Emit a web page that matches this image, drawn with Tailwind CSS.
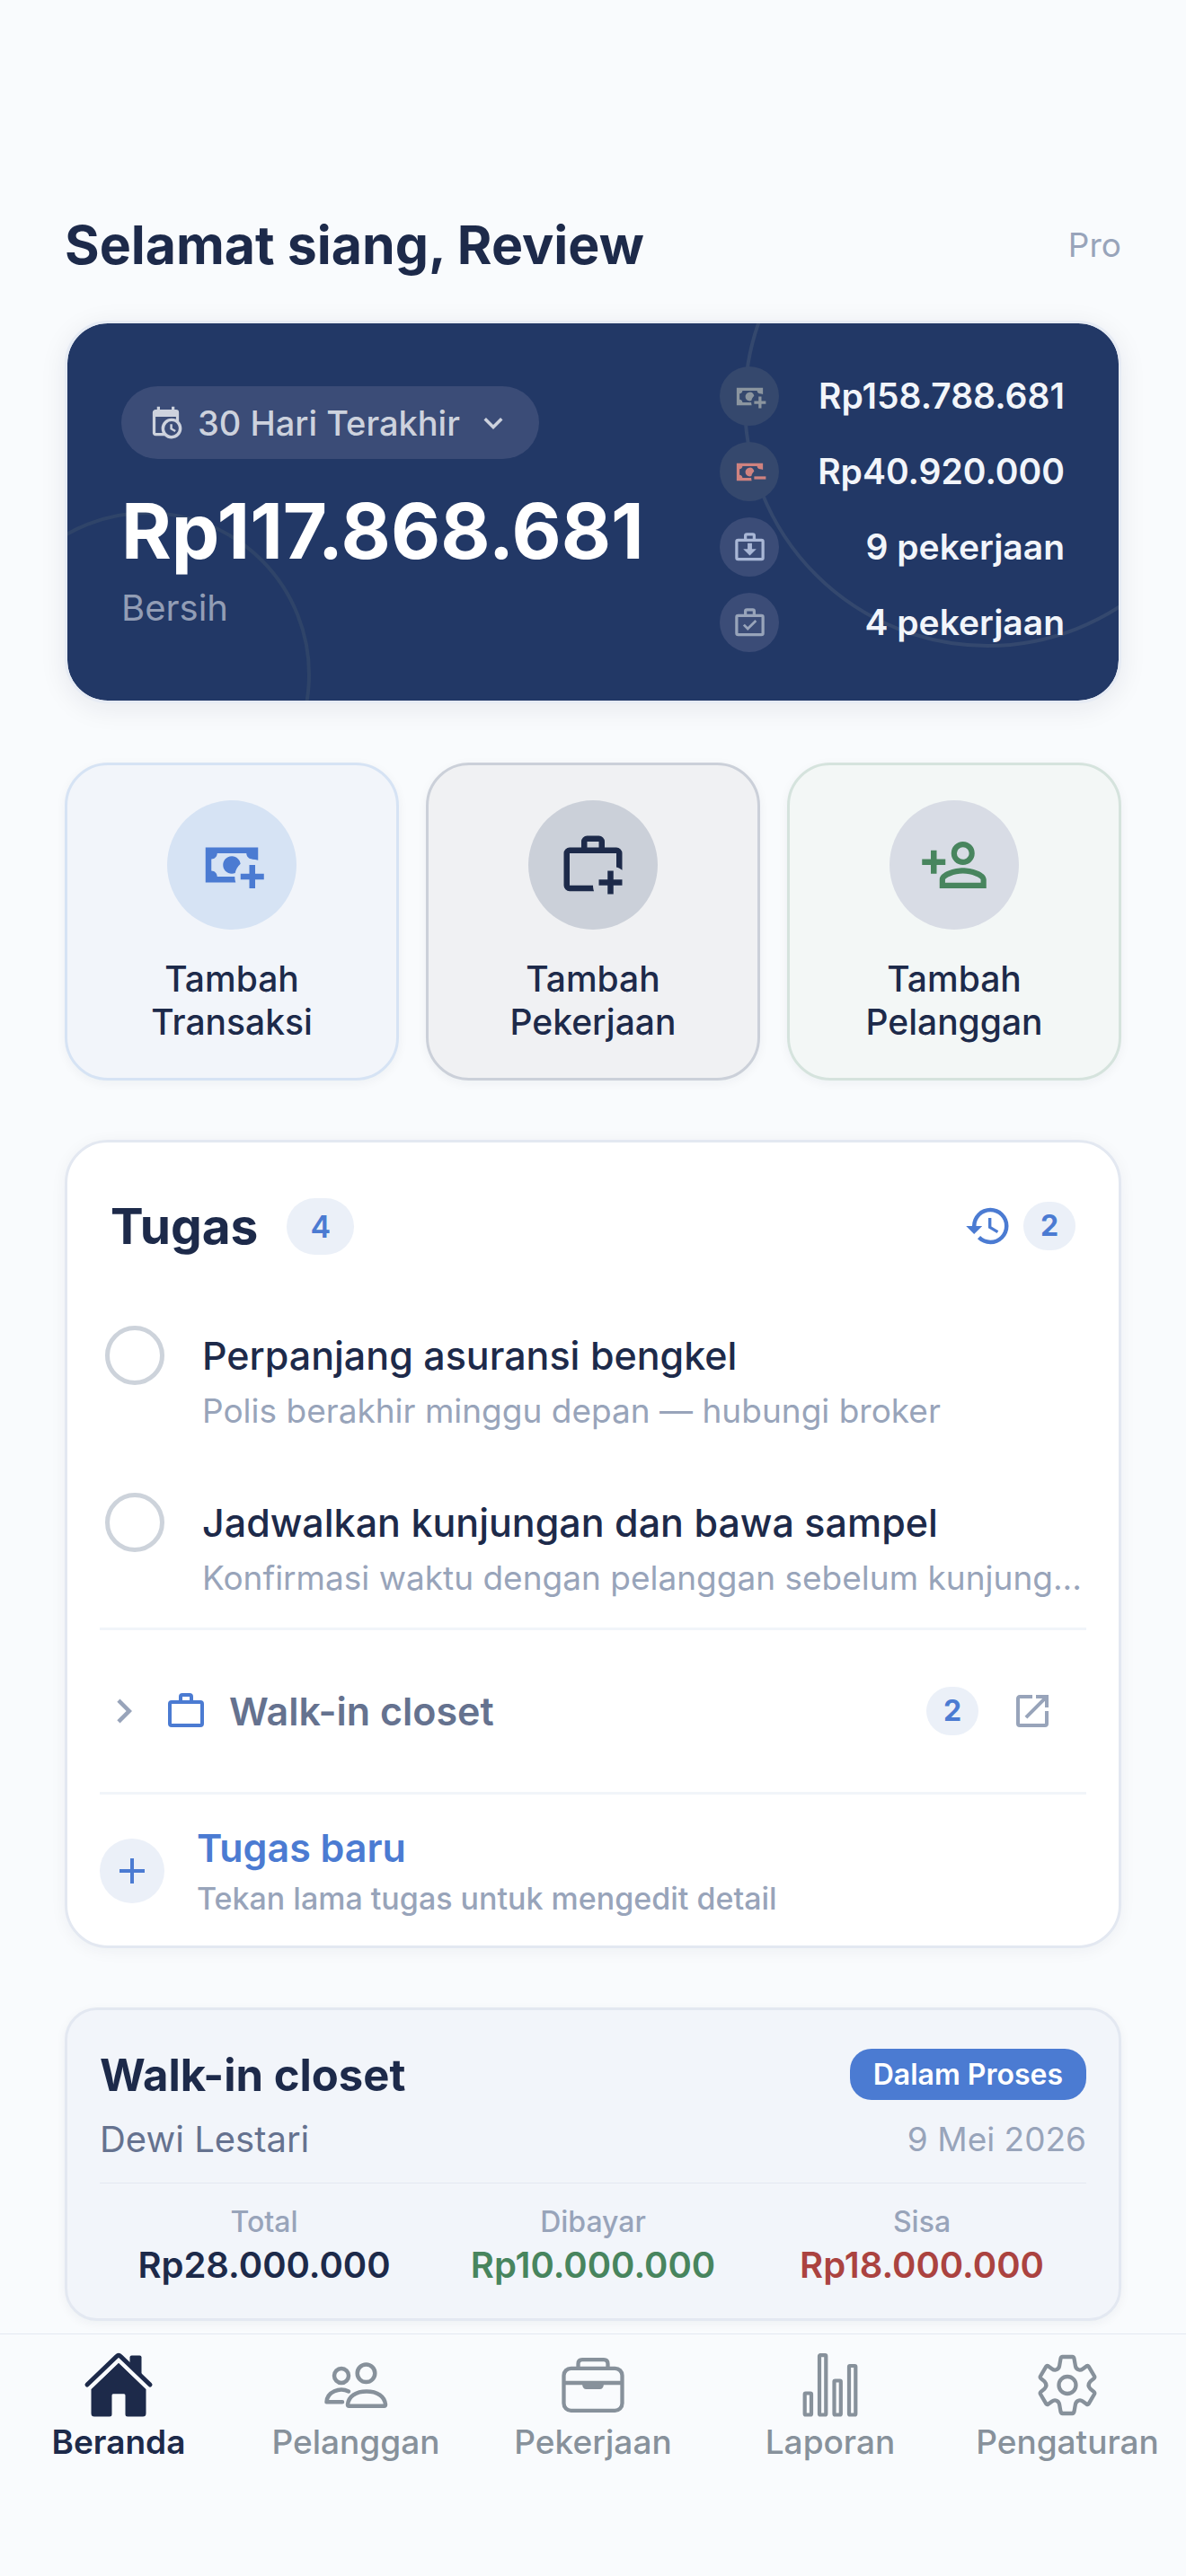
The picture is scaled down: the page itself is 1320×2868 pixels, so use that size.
<!DOCTYPE html>
<html lang="id">
<head>
    <meta charset="UTF-8">
    <meta name="viewport" content="width=device-width, initial-scale=1.0">
    <title>Beranda</title>
    <script src="https://cdn.jsdelivr.net/npm/@tailwindcss/browser@4"></script>
</head>
<body class="flex min-h-screen flex-col bg-[#f9fbfd] font-['Inter','Liberation_Sans',sans-serif] text-[#1d2a4a]">
    <!-- Shared icon shapes -->
    <svg class="hidden" aria-hidden="true">
        <symbol id="cash-body" viewBox="0 0 24 24">
            <path d="M14.97 11.61C14.85 10.28 13.59 8.97 12 9C10.3 9.03 9 10.3 9 12C9 13.7 10.3 14.94 12 15C12.38 15 12.77 14.92 13.14 14.77C13.41 13.67 13.86 12.63 14.97 11.61M13 16H7C7 14.9 6.1 14 5 14V10C6.1 10 7 9.1 7 8H17C17 9.1 17.9 10 19 10V10.06C19.67 10.06 20.34 10.18 21 10.4V6H3V18H13.32C13.1 17.33 13 16.66 13 16Z"/>
        </symbol>
        <symbol id="briefcase" viewBox="0 0 24 24">
            <path d="M20 6a2 2 0 0 1 2 2v11a2 2 0 0 1-2 2H4a2 2 0 0 1-2-2V8a2 2 0 0 1 2-2h4V4a2 2 0 0 1 2-2h4a2 2 0 0 1 2 2v2h4M4 8v11h16V8H4M14 6V4h-4v2h4Z"/>
        </symbol>
    </svg>

    <main class="flex flex-col gap-[66px] px-18 pt-[237px] pb-[14px]">
        <div class="flex flex-col gap-12">
            <header class="flex items-center justify-between">
                <h1 class="text-[59px] leading-[72px] font-bold">Selamat siang, Review</h1>
                <span class="text-[37px] leading-[48px] text-[#98a4ba]">Pro</span>
            </header>

            <!-- Summary card -->
            <section class="relative flex items-center justify-between overflow-hidden rounded-[48px] border-3 border-[#e6ebf4] bg-[#223866] bg-clip-padding px-15 pt-12 pb-[54px] shadow-[0_6px_30px_rgba(20,30,50,0.08)]">
                <div class="absolute -bottom-[153px] -left-[93px] size-[364px] rounded-full border-4 border-[#2f4469]"></div>
                <div class="absolute -top-[183px] right-[-126px] size-[544px] rounded-full border-4 border-[#34486e]"></div>
                <div class="relative">
                    <button class="flex h-[81px] items-center rounded-full bg-[#3b4c77] px-[30px] text-[#cdd2dd]">
                        <svg class="size-[39px] fill-current" viewBox="0 0 24 24"><path d="M15,13H16.5V15.82L18.94,17.23L18.19,18.53L15,16.69V13M19,8H5V19H9.67C9.24,18.09 9,17.07 9,16A7,7 0 0,1 16,9C17.07,9 18.09,9.24 19,9.67V8M5,21C3.89,21 3,20.1 3,19V5C3,3.89 3.89,3 5,3H6V1H8V3H16V1H18V3H19A2,2 0 0,1 21,5V11.1C22.24,12.36 23,14.09 23,16A7,7 0 0,1 16,23C14.09,23 12.36,22.24 11.1,21H5M16,11.15A4.85,4.85 0 0,0 11.15,16C11.15,18.68 13.32,20.85 16,20.85A4.85,4.85 0 0,0 20.85,16C20.85,13.32 18.68,11.15 16,11.15Z"/></svg>
                        <span class="ml-4 text-[38px] leading-[48px] font-medium">30 Hari Terakhir</span>
                        <svg class="ml-4 size-[42px] fill-current" viewBox="0 0 24 24"><path d="M7.41,8.58L12,13.17L16.59,8.58L18,10L12,16L6,10L7.41,8.58Z"/></svg>
                    </button>
                    <p class="mt-[33px] text-[85px] leading-[96px] font-bold text-white">Rp117.868.681</p>
                    <p class="mt-[10px] text-[40px] leading-[54px] text-[#929db5]">Bersih</p>
                </div>
                <ul class="relative flex w-96 flex-col gap-[18px] text-[39px] leading-[66px] font-semibold text-[#f2f5fa]">
                    <li class="flex items-center justify-between">
                        <span class="flex size-[66px] items-center justify-center rounded-full bg-[#35486d]">
                            <svg class="size-[39px] fill-[#8b959f]" viewBox="0 0 24 24"><use href="#cash-body"/><path d="M15 15V17H18V20H20V17H23V15H20V12H18V15Z"/></svg>
                        </span>
                        <span>Rp158.788.681</span>
                    </li>
                    <li class="flex items-center justify-between">
                        <span class="flex size-[66px] items-center justify-center rounded-full bg-[#35486d]">
                            <svg class="size-[39px] fill-[#cf827f]" viewBox="0 0 24 24"><use href="#cash-body"/><path d="M15 15V17H23V15Z"/></svg>
                        </span>
                        <span>Rp40.920.000</span>
                    </li>
                    <li class="flex items-center justify-between">
                        <span class="flex size-[66px] items-center justify-center rounded-full bg-[#3b4c77]">
                            <svg class="size-[39px] fill-[#a9b7d6]" viewBox="0 0 24 24"><use href="#briefcase"/><path d="M10.5 9h3v4h3L12 17.5 7.5 13h3Z"/></svg>
                        </span>
                        <span>9 pekerjaan</span>
                    </li>
                    <li class="flex items-center justify-between">
                        <span class="flex size-[66px] items-center justify-center rounded-full bg-[#3b4c77]">
                            <svg class="size-[39px] fill-[#98a4ba]" viewBox="0 0 24 24"><use href="#briefcase"/><path d="M10.6 17.2 7.3 13.9l1.2-1.2 2.1 2.1 5-5 1.2 1.2Z"/></svg>
                        </span>
                        <span>4 pekerjaan</span>
                    </li>
                </ul>
            </section>
        </div>

        <!-- Quick actions -->
        <div class="grid grid-cols-3 gap-[30px] text-[39px] leading-[48px] font-medium">
            <button class="flex flex-col items-center rounded-[48px] border-3 border-[#d6e3f4] bg-[#f2f5fa] px-6 pt-[39px] pb-[38px] shadow-[0_3px_12px_rgba(20,30,50,0.05)]">
                <span class="mb-[31px] flex size-36 items-center justify-center rounded-full bg-[#d6e3f4]">
                    <svg class="size-[78px] fill-[#4b7bd2]" viewBox="0 0 24 24"><use href="#cash-body"/><path d="M15 15V17H18V20H20V17H23V15H20V12H18V15Z"/></svg>
                </span>
                Tambah<br>Transaksi
            </button>
            <button class="flex flex-col items-center rounded-[48px] border-3 border-[#cbd0d9] bg-[#f0f1f3] px-6 pt-[39px] pb-[38px] shadow-[0_3px_12px_rgba(20,30,50,0.05)]">
                <span class="mb-[31px] flex size-36 items-center justify-center rounded-full bg-[#cbd0d9]">
                    <svg class="size-[78px] fill-[#1d2a4a]" viewBox="0 0 24 24"><path d="M20 6a2 2 0 0 1 2 2v5.8c-.58-.45-1.25-.8-2-1V8H4v11h8c0 .7.1 1.4.34 2H4a2 2 0 0 1-2-2V8a2 2 0 0 1 2-2h4V4a2 2 0 0 1 2-2h4a2 2 0 0 1 2 2v2h4M14 6V4h-4v2h4M17 14h2v3h3v2h-3v3h-2v-3h-3v-2h3Z"/></svg>
                </span>
                Tambah<br>Pekerjaan
            </button>
            <button class="flex flex-col items-center rounded-[48px] border-3 border-[#d5e3dd] bg-[#f3f7f6] px-6 pt-[39px] pb-[38px] shadow-[0_3px_12px_rgba(20,30,50,0.05)]">
                <span class="mb-[31px] flex size-36 items-center justify-center rounded-full bg-[#d8dce5]">
                    <svg class="size-[78px] fill-[#48855e]" viewBox="0 0 24 24"><path d="M15,4A4,4 0 0,0 11,8A4,4 0 0,0 15,12A4,4 0 0,0 19,8A4,4 0 0,0 15,4M15,5.9C16.16,5.9 17.1,6.84 17.1,8C17.1,9.16 16.16,10.1 15,10.1A2.1,2.1 0 0,1 12.9,8A2.1,2.1 0 0,1 15,5.9M4,7V10H1V12H4V15H6V12H9V10H6V7H4M15,13C12.33,13 7,14.33 7,17V20H23V17C23,14.33 17.67,13 15,13M15,14.9C17.97,14.9 21.1,16.36 21.1,17V18.1H8.9V17C8.9,16.36 12,14.9 15,14.9Z"/></svg>
                </span>
                Tambah<br>Pelanggan
            </button>
        </div>

        <!-- Tasks -->
        <section class="rounded-[48px] border-3 border-[#e3e8f1] bg-white px-9 shadow-[0_3px_18px_rgba(20,30,50,0.05)]">
            <div class="flex h-[129px] items-end justify-between px-3">
                <div class="flex items-center gap-8">
                    <h2 class="text-[55px] leading-[72px] font-bold">Tugas</h2>
                    <span class="rounded-full bg-[#ebf0f8] px-[26px] text-[34px] leading-[63px] font-semibold text-[#4b7bd2]">4</span>
                </div>
                <button class="flex h-18 items-center gap-3 text-[#4b7bd2]" aria-label="Riwayat">
                    <svg class="size-[54px] fill-current" viewBox="0 0 24 24"><path d="M13.5,8H12V13L16.28,15.54L17,14.33L13.5,12.25V8M13,3A9,9 0 0,0 4,12H1L4.96,16.03L9,12H6A7,7 0 0,1 13,5A7,7 0 0,1 20,12A7,7 0 0,1 13,19C11.07,19 9.32,18.21 8.06,16.94L6.64,18.36C8.27,20 10.5,21 13,21A9,9 0 0,0 22,12A9,9 0 0,0 13,3"/></svg>
                    <span class="w-[58px] rounded-full bg-[#ebf0f8] text-[32px] leading-[54px] font-bold">2</span>
                </button>
            </div>
            <ul class="flex flex-col gap-[67px] pt-[75px] pb-[31px]">
                <li class="flex gap-[42px] pl-[6px]">
                    <input id="task-1" type="checkbox" class="size-[66px] shrink-0 appearance-none rounded-full border-5 border-[#cdd3db]">
                    <label for="task-1" class="flex min-w-0 flex-col gap-[11px] pt-[6px]">
                        <span class="truncate text-[43px] leading-[54px] font-medium">Perpanjang asuransi bengkel</span>
                        <span class="truncate text-[37px] leading-[48px] text-[#98a4ba]">Polis berakhir minggu depan — hubungi broker</span>
                    </label>
                </li>
                <li class="flex gap-[42px] pl-[6px]">
                    <input id="task-2" type="checkbox" class="size-[66px] shrink-0 appearance-none rounded-full border-5 border-[#cdd3db]">
                    <label for="task-2" class="flex min-w-0 flex-col gap-[11px] pt-[6px]">
                        <span class="truncate text-[43px] leading-[54px] font-medium">Jadwalkan kunjungan dan bawa sampel</span>
                        <span class="truncate text-[37px] leading-[48px] text-[#98a4ba]">Konfirmasi waktu dengan pelanggan sebelum kunjung...</span>
                    </label>
                </li>
            </ul>
            <div class="flex h-[186px] items-center border-y-3 border-[#f1f5f9] pr-9">
                <button class="flex flex-1 items-center text-[43px] leading-[54px] font-semibold text-[#65728f]">
                    <svg class="size-[54px] fill-[#98a4ba]" viewBox="0 0 24 24"><path d="M8.59,16.58L13.17,12L8.59,7.41L10,6L16,12L10,18L8.59,16.58Z"/></svg>
                    <svg class="mr-6 ml-[18px] size-12 fill-[#4b7bd2]" viewBox="0 0 24 24"><use href="#briefcase"/></svg>
                    Walk-in closet
                </button>
                <span class="w-[58px] rounded-full bg-[#ebf0f8] text-center text-[32px] leading-[54px] font-bold text-[#4b7bd2]">2</span>
                <a href="#" class="ml-9" aria-label="Buka pekerjaan">
                    <svg class="size-12 fill-[#98a4ba]" viewBox="0 0 24 24"><path d="M14,3V5H17.59L7.76,14.83L9.17,16.24L19,6.41V10H21V3M19,19H5V5H12V3H5C3.89,3 3,3.9 3,5V19A2,2 0 0,0 5,21H19A2,2 0 0,0 21,19V12H19V19Z"/></svg>
                </a>
            </div>
            <button class="flex w-full items-center gap-9 pt-8 pb-[31px] text-left">
                <span class="flex size-18 items-center justify-center rounded-full bg-[#ebf0f8]">
                    <svg class="size-12 fill-[#4b7bd2]" viewBox="0 0 24 24"><path d="M19,13H13V19H11V13H5V11H11V5H13V11H19V13Z"/></svg>
                </span>
                <span class="flex flex-col gap-[9px]">
                    <span class="text-[43px] leading-[54px] font-semibold text-[#4b7bd2]">Tugas baru</span>
                    <span class="text-[34px] leading-[42px] font-medium text-[#98a4ba]">Tekan lama tugas untuk mengedit detail</span>
                </span>
            </button>
        </section>

        <!-- Job card -->
        <article class="rounded-[36px] border-3 border-[#e3e8f1] bg-[#f2f5fa] px-9 pt-[43px] pb-[31px] shadow-[0_3px_12px_rgba(20,30,50,0.05)]">
            <div class="flex items-start justify-between">
                <h2 class="text-[49px] leading-[60px] font-bold">Walk-in closet</h2>
                <span class="rounded-3xl bg-[#4b7bd2] px-[26px] text-[32px] leading-[57px] font-semibold text-white">Dalam Proses</span>
            </div>
            <div class="mt-[14px] flex items-start justify-between">
                <p class="text-[40px] leading-[54px] text-[#65728f]">Dewi Lestari</p>
                <time datetime="2026-05-09" class="text-[37px] leading-[54px] text-[#98a4ba]">9 Mei 2026</time>
            </div>
            <dl class="mt-[21px] grid grid-cols-3 border-t border-[#e3e8f1] pt-[22px] pb-px text-center text-[40px] leading-[54px] font-semibold">
                <div>
                    <dt class="text-[32px] leading-[42px] font-medium text-[#98a4ba]">Total</dt>
                    <dd>Rp28.000.000</dd>
                </div>
                <div>
                    <dt class="text-[32px] leading-[42px] font-medium text-[#98a4ba]">Dibayar</dt>
                    <dd class="text-[#48855e]">Rp10.000.000</dd>
                </div>
                <div>
                    <dt class="text-[32px] leading-[42px] font-medium text-[#98a4ba]">Sisa</dt>
                    <dd class="text-[#ab4340]">Rp18.000.000</dd>
                </div>
            </dl>
        </article>
    </main>

    <!-- Tab bar -->
    <nav class="sticky bottom-0 mt-auto grid grid-cols-5 border-t border-[#e3e8f1] bg-[#f9fbfd] pt-[18px] pb-[125px] text-[37px] leading-[48px] font-medium text-[#87919b]">
        <a href="#" class="flex flex-col items-center font-semibold text-[#1d2a4a]" aria-current="page">
            <svg class="size-[78px]" viewBox="0 0 78 78" fill="currentColor">
                <path d="M39 13.700 69.500 43V70Q69.500 73.500 66 73.500H49Q46.500 73.500 46.500 71V50Q46.500 48.300 45 48.300H33Q31.500 48.300 31.500 50V71Q31.500 73.500 29 73.500H12Q8.500 73.500 8.500 70V43Z"/>
                <path d="M4 38 36.800 6.500Q39 4.300 41.200 6.500L74 38" fill="none" stroke="#f9fbfd" stroke-width="13"/>
                <path d="M51.500 14V7.500Q51.500 5.500 53.500 5.500H62.500Q64.500 5.500 64.500 7.500V27Z"/>
                <path d="M4 38 36.800 6.500Q39 4.300 41.200 6.500L74 38" fill="none" stroke="currentColor" stroke-width="5" stroke-linecap="round"/>
            </svg>
            Beranda
        </a>
        <a href="#" class="flex flex-col items-center">
            <svg class="size-[78px]" viewBox="0 0 78 78" fill="none" stroke="currentColor" stroke-width="4.500" stroke-linecap="round" stroke-linejoin="round">
                <circle cx="23" cy="28" r="8"/>
                <circle cx="50.500" cy="25.300" r="9.800"/>
                <path d="M30 60C31 51 39 45.500 51 45.500S71 51 72 60Q72 61.700 70.500 61.700H31.500Q30 61.700 30 60Z"/>
                <path d="M31 45.500C21 40.500 7 46 6.500 57.300H24"/>
            </svg>
            Pelanggan
        </a>
        <a href="#" class="flex flex-col items-center">
            <svg class="size-[78px]" viewBox="0 0 78 78" fill="none" stroke="currentColor" stroke-width="4.300">
                <rect x="6.500" y="19.800" width="65" height="47" rx="8"/>
                <path d="M22.500 19V15Q22.500 10.200 27 10.200H51Q55.500 10.200 55.500 15V19M6.500 36H71.500"/>
                <path d="M27 36H51Q51 43 47 43H31Q27 43 27 36Z" fill="currentColor" stroke="none"/>
            </svg>
            Pekerjaan
        </a>
        <a href="#" class="flex flex-col items-center">
            <svg class="size-[78px]" viewBox="0 0 78 78" fill="none" stroke="currentColor" stroke-width="4.200">
                <rect x="10.700" y="47.500" width="7.300" height="24" rx="1"/>
                <rect x="27" y="5.200" width="7.300" height="66.300" rx="1"/>
                <rect x="43.500" y="33.500" width="7.300" height="38" rx="1"/>
                <rect x="60" y="17" width="7.300" height="54.500" rx="1"/>
            </svg>
            Laporan
        </a>
        <a href="#" class="flex flex-col items-center">
            <svg class="size-[78px]" viewBox="0 0 78 78" fill="none" stroke="currentColor" stroke-width="4.300" stroke-linejoin="round">
                <circle cx="39" cy="38.500" r="9.500"/>
                <path d="M39 7H44.500Q46 7 46.500 9L48 17.500Q48.600 20.500 52 21.500Q54 22 56 20.500L60.500 17.200Q61.800 16.400 62.600 17.600L69 28.500Q69.700 29.800 68.700 30.800L64.500 34.300Q60.800 38.500 64.500 42.700L68.700 46.200Q69.700 47.200 69 48.500L62.600 59.400Q61.800 60.600 60.500 59.800L56 56.500Q54 55 52 55.500Q48.600 56.500 48 59.500L46.500 68Q46 70 44.500 70H33.500Q32 70 31.500 68L30 59.500Q29.400 56.500 26 55.500Q24 55 22 56.500L17.500 59.800Q16.200 60.600 15.400 59.400L9 48.500Q8.300 47.200 9.300 46.200L13.500 42.700Q17.200 38.500 13.500 34.300L9.300 30.800Q8.300 29.800 9 28.500L15.400 17.600Q16.200 16.400 17.500 17.200L22 20.500Q24 22 26 21.500Q29.400 20.500 30 17.500L31.500 9Q32 7 33.500 7Z"/>
            </svg>
            Pengaturan
        </a>
    </nav>
</body>
</html>
